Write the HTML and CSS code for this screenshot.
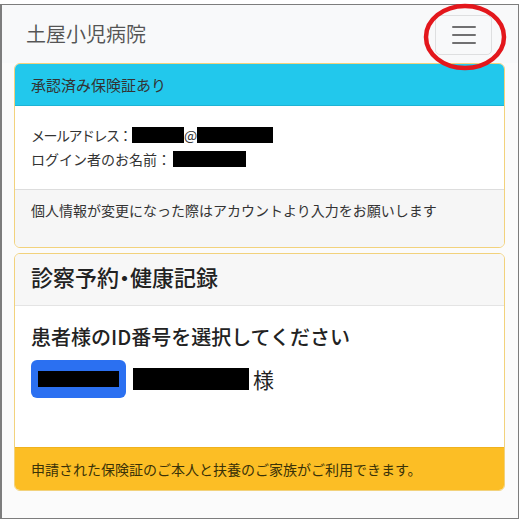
FILE: index.html
```html
<!DOCTYPE html>
<html lang="ja">
<head>
<meta charset="utf-8">
<title>土屋小児病院</title>
<link rel="stylesheet" href="styles.css">
</head>
<body>
<div class="frame">
  <nav class="navbar">
    <span class="brand">土屋小児病院</span>
    <button class="toggler" type="button" aria-label="menu">
      <svg class="toggler-icon" width="30" height="30" viewBox="0 0 30 30"><path d="M4 7h22M4 15h22M4 23h22" stroke="rgba(0,0,0,0.55)" stroke-width="2" stroke-linecap="round"/></svg>
    </button>
  </nav>
  <main class="main">
    <section class="card">
      <div class="card-header info">承認済み保険証あり</div>
      <div class="card-body first">
        <div class="line"><span class="tight">メールアドレス：</span><span class="redact r1"></span>@<span class="redact r2"></span></div>
        <div class="line">ログイン者のお名前：<span class="redact r3"></span></div>
      </div>
      <div class="card-footer light">
        <p>個人情報が変更になった際はアカウントより入力をお願いします</p>
      </div>
    </section>
    <section class="card second">
      <div class="card-header light">
        <h4>診察予約<span class="dot">・</span>健康記録</h4>
      </div>
      <div class="card-body tall">
        <h5>患者様のID番号を選択してください</h5>
        <div class="patient">
          <button class="btn-primary" type="button"><span class="redact r4"></span></button>
          <span class="redact r5"></span><span class="sama">様</span>
        </div>
      </div>
      <div class="card-footer warning">申請された保険証のご本人と扶養のご家族がご利用できます。</div>
    </section>
  </main>
</div>
<svg class="circle-mark" width="100" height="76" viewBox="0 0 100 76"><ellipse cx="47" cy="37" rx="39" ry="31" fill="none" stroke="#e3171c" stroke-width="4.5"/></svg>
</body>
</html>
```
FILE: styles.css
```css
html, body {
  margin: 0;
  padding: 0;
  background: #ffffff;
}
body {
  position: relative;
  font-family: "Noto Sans CJK JP", "Noto Sans", sans-serif;
  color: #333333;
}
.frame {
  margin-top: 4px;
  width: 519px;
  height: 515px;
  box-sizing: border-box;
  border: 1px solid #7d7d7d;
  border-left-width: 2px;
  background: #fbfbfb;
  overflow: hidden;
}
.navbar {
  height: 58px;
  display: flex;
  align-items: center;
  justify-content: space-between;
  padding: 0 26px 0 24px;
  background: #f8f9fa;
}
.brand {
  font-size: 20px;
  line-height: 30px;
  color: rgba(0, 0, 0, 0.68);
}
.toggler {
  width: 57px;
  height: 40px;
  padding: 0;
  margin-top: 1px;
  border: 1px solid rgba(0, 0, 0, 0.1);
  border-radius: 5px;
  background: transparent;
  display: flex;
  align-items: center;
  justify-content: center;
}
.toggler-icon {
  display: block;
}
.main {
  padding: 0 13px 0 12px;
}
.card {
  border: 1px solid #f2d27c;
  border-radius: 6px;
  overflow: hidden;
  background: #ffffff;
}
.card.second {
  margin-top: 5px;
}
.card-header {
  padding: 9px 16px 8px;
  border-bottom: 1px solid rgba(0, 0, 0, 0.1);
}
.card-header.info {
  background: #22c8ec;
  font-size: 15px;
  line-height: 24px;
  color: #333333;
}
.card-header.light {
  background: #f7f7f7;
  padding: 9px 16px 8px;
  border-bottom-color: #e4e4e4;
}
.card-header h4 {
  margin: 0 0 8px;
  font-size: 22px;
  line-height: 26px;
  font-weight: 500;
  color: #222222;
}
.dot {
  font-feature-settings: "palt" 1;
}
.card-body {
  padding: 17px 16px 18px;
  font-size: 14px;
  line-height: 24px;
}
.card-body.tall {
  padding: 16px 16px 49px;
}
.card-body h5 {
  margin: 0 0 8px;
  font-size: 20px;
  line-height: 30px;
  font-weight: 500;
  color: #222222;
}
.line {
  display: flex;
  align-items: center;
  height: 24px;
}
.tight {
  letter-spacing: -1.5px;
}
.redact {
  display: inline-block;
  background: #000000;
}
.r1 { width: 52px; height: 16px; margin-left: 1px; }
.r2 { width: 76px; height: 16px; }
.r3 { width: 73px; height: 16px; margin-left: 2px; }
.r4 { width: 81px; height: 16px; }
.r5 { width: 116px; height: 22px; margin-left: 7px; }
.card-footer {
  border-top: 1px solid #dddddd;
  padding: 8px 16px 9px;
  font-size: 14px;
  line-height: 24px;
}
.card-footer p {
  margin: 0 0 16px;
}
.card-footer.light {
  background: #f6f6f6;
}
.card-footer.warning {
  padding: 9px 16px;
  background: #fcbe25;
  border-top-color: #f0b21e;
  color: #3a3208;
}
.patient {
  display: flex;
  align-items: center;
}
.btn-primary {
  width: 95px;
  height: 38px;
  padding: 0;
  border: none;
  border-radius: 6px;
  background: #2b70f1;
  display: flex;
  align-items: center;
  justify-content: center;
}
.sama {
  margin-left: 4px;
  font-size: 21px;
  line-height: 30px;
  color: #222222;
}
.circle-mark {
  position: absolute;
  left: 418px;
  top: 0;
}
```
